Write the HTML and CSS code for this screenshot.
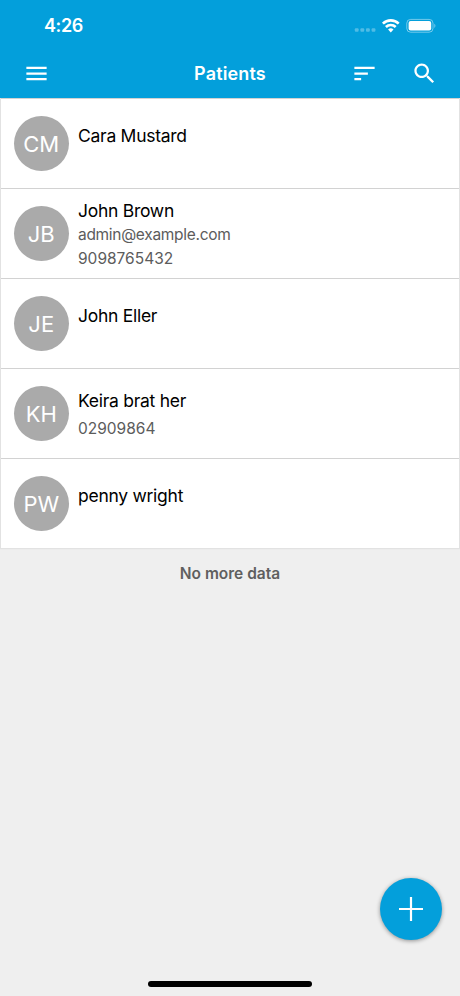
FILE: index.html
```html
<!DOCTYPE html>
<html lang="en">
<head>
    <meta charset="UTF-8">
    <meta name="viewport" content="width=device-width, initial-scale=1.0">
    <title>Patients</title>
    <link rel="stylesheet" href="styles.css">
</head>
<body>

    <header class="header">
        <div class="status-bar">
            <span class="time">4:26</span>
            <svg class="status-icons" width="82" height="16" viewBox="0 0 82 16">
                <g fill="#fff" opacity="0.3">
                    <rect x="0.8" y="10.2" width="3.8" height="3.6" rx="1"/>
                    <rect x="6.4" y="10.2" width="3.8" height="3.6" rx="1"/>
                    <rect x="12" y="10.2" width="3.8" height="3.6" rx="1"/>
                    <rect x="17.6" y="10.2" width="3.8" height="3.6" rx="1"/>
                </g>
                <g fill="none" stroke="#fff" stroke-width="2.6">
                    <path d="M28.9 5.6a11.2 11.2 0 0 1 15.8 0"/>
                    <path d="M31.9 9a7 7 0 0 1 9.8 0"/>
                </g>
                <path fill="#fff" d="M36.8 14.4l-2.7-2.8a3.9 3.9 0 0 1 5.4 0z"/>
                <rect x="52.8" y="1.4" width="26.2" height="12.8" rx="3.8" fill="none" stroke="#fff" opacity="0.45"/>
                <rect x="54.6" y="3.1" width="22.6" height="9.4" rx="2" fill="#fff"/>
                <path d="M80.3 5.7c1.5.6 1.5 3.6 0 4.2z" fill="#fff" opacity="0.45"/>
            </svg>
        </div>
        <nav class="navbar">
            <svg class="icon" viewBox="0 0 24 24"><path d="M3 18h18v-2H3v2zm0-5h18v-2H3v2zm0-7v2h18V6H3z"/></svg>
            <h1>Patients</h1>
            <div class="actions">
                <svg class="icon" viewBox="0 0 24 24"><path d="M3 18h6v-2H3v2zM3 6v2h18V6H3zm0 7h12v-2H3v2z"/></svg>
                <svg class="icon" viewBox="0 0 24 24"><path d="M15.5 14h-.79l-.28-.27C15.41 12.59 16 11.11 16 9.5 16 5.91 13.09 3 9.5 3S3 5.91 3 9.5 5.91 16 9.5 16c1.61 0 3.09-.59 4.23-1.57l.27.28v.79l5 4.99L20.49 19l-4.99-5zm-6 0C7.01 14 5 11.99 5 9.5S7.01 5 9.5 5 14 7.01 14 9.5 11.99 14 9.5 14z"/></svg>
            </div>
        </nav>
    </header>

    <main class="patient-list">
        <div class="patient">
            <div class="avatar">CM</div>
            <div class="info"><p class="name">Cara Mustard</p></div>
        </div>
        <div class="patient full">
            <div class="avatar">JB</div>
            <div class="info">
                <p class="name">John Brown</p>
                <p class="detail email">admin@example.com</p>
                <p class="detail">9098765432</p>
            </div>
        </div>
        <div class="patient">
            <div class="avatar">JE</div>
            <div class="info"><p class="name">John Eller</p></div>
        </div>
        <div class="patient phone-only">
            <div class="avatar">KH</div>
            <div class="info">
                <p class="name">Keira brat her</p>
                <p class="detail">02909864</p>
            </div>
        </div>
        <div class="patient">
            <div class="avatar">PW</div>
            <div class="info"><p class="name">penny wright</p></div>
        </div>
    </main>

    <p class="no-more">No more data</p>

    <button class="add-btn" aria-label="Add patient">
        <svg width="26" height="26" viewBox="0 0 26 26"><path d="M13 1v24M1 13h24" stroke="#fff" stroke-width="2.2"/></svg>
    </button>
    <div class="home-bar"></div>

</body>
</html>
```
FILE: styles.css
```css
* {
    box-sizing: border-box;
}
body {
    margin: 0;
    height: 996px;
    position: relative;
    overflow: hidden;
    background-color: #efefef;
    font-family: Inter, "Liberation Sans", sans-serif;
}
h1, p {
    margin: 0;
}

.header {
    height: 98px;
    position: relative;
    z-index: 1;
    background-color: #039fdb;
    color: #fff;
}
.status-bar {
    height: 50px;
    padding: 1px 24px 0 44px;
    display: flex;
    align-items: center;
    justify-content: space-between;
}
.time {
    font-size: 18px;
    font-weight: 600;
    letter-spacing: -0.4px;
}
.navbar {
    height: 46px;
    padding: 0 22.5px;
    display: grid;
    grid-template-columns: 1fr auto 1fr;
    align-items: center;
}
.navbar h1 {
    font-size: 18px;
    font-weight: 600;
    letter-spacing: 0.15px;
}
.icon {
    display: block;
    width: 27px;
    height: 27px;
    fill: #fff;
}
.actions {
    display: flex;
    justify-content: flex-end;
    gap: 33px;
}

.patient-list {
    margin: 0 1px;
    background-color: #fff;
    box-shadow: 0 0 1px 1px #e2e2e2;
}
.patient {
    height: 90px;
    padding-left: 12.5px;
    border-top: 1px solid #d2d2d2;
    display: flex;
    align-items: center;
    gap: 9px;
}
.avatar {
    width: 55.5px;
    height: 55.5px;
    border-radius: 50%;
    background-color: #aaa;
    color: #fff;
    font-size: 22px;
    line-height: 56px;
    text-align: center;
}
.info {
    height: 89px;
    padding-top: 25px;
}
.full .info {
    padding-top: 10px;
}
.phone-only .info {
    padding-top: 20px;
}
.name {
    color: #000;
    font-size: 17.5px;
    line-height: 24px;
    letter-spacing: -0.27px;
}
.detail {
    color: #5c5c5c;
    font-size: 15.5px;
    line-height: 23.5px;
}
.email {
    letter-spacing: -0.3px;
}
.phone-only .detail {
    margin-top: 4px;
}

.no-more {
    margin-top: 15px;
    color: #5f5f5f;
    font-size: 15.5px;
    font-weight: 600;
    line-height: 22px;
    text-align: center;
}

.add-btn {
    position: absolute;
    right: 18px;
    bottom: 56px;
    width: 62px;
    height: 62px;
    padding: 0;
    border: none;
    border-radius: 50%;
    background-color: #039fdb;
    box-shadow: 0 1px 4px rgba(0, 0, 0, 0.4);
    display: flex;
    align-items: center;
    justify-content: center;
}
.home-bar {
    position: absolute;
    left: 148px;
    bottom: 9px;
    width: 164px;
    height: 6px;
    border-radius: 3px;
    background-color: #000;
}
```
